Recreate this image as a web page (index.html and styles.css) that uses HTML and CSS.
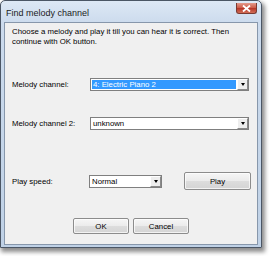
FILE: index.html
```html
<!DOCTYPE html>
<html>
<head>
<meta charset="utf-8">
<link rel="stylesheet" href="styles.css">
</head>
<body>
<div class="window">
  <div class="titlebar">
    <span class="title">Find melody channel</span>
    <span class="close"><svg width="9" height="7" viewBox="0 0 9 7"><path d="M1 0.5 L8 6.5 M8 0.5 L1 6.5" stroke="#fff" stroke-width="1.8"/></svg></span>
  </div>
  <div class="client">
    <p class="intro">Choose a melody and play it till you can hear it is correct. Then continue with OK button.</p>
    <div class="row row-channel">
      <span class="label">Melody channel:</span>
      <div class="combo combo-wide"><span class="value selected">4: Electric Piano 2</span><span class="arrow"><i></i></span></div>
    </div>
    <div class="row row-channel2">
      <span class="label">Melody channel 2:</span>
      <div class="combo combo-wide"><span class="value">unknown</span><span class="arrow"><i></i></span></div>
    </div>
    <div class="row row-speed">
      <span class="label">Play speed:</span>
      <div class="combo combo-small"><span class="value">Normal</span><span class="arrow"><i></i></span></div>
      <button class="btn btn-play">Play</button>
    </div>
    <div class="actions">
      <button class="btn btn-action">OK</button>
      <button class="btn btn-action">Cancel</button>
    </div>
  </div>
</div>
</body>
</html>
```
FILE: styles.css
```css
html, body {
  margin: 0;
  padding: 0;
  background: #ffffff;
}
body {
  width: 270px;
  height: 256px;
  font-family: "Liberation Sans", Arial, sans-serif;
  font-size: 7.8px;
  color: #000;
}
.window {
  width: 262px;
  height: 248px;
  box-sizing: border-box;
  border: 1px solid #4b5665;
  border-radius: 5px 5px 0 0;
  background: linear-gradient(#dde8f5 0px, #ccdbed 22px, #bfd1e6 100%);
  box-shadow: 2px 3px 4px 1px rgba(0, 0, 0, 0.45);
  display: flex;
  flex-direction: column;
  padding: 0 3px 2px 3px;
}
.titlebar {
  height: 21px;
  display: flex;
  align-items: flex-start;
  justify-content: space-between;
  padding-left: 2px;
}
.title {
  font-size: 9px;
  line-height: 9px;
  margin-top: 8px;
  color: #1b1b1b;
}
.close {
  width: 21px;
  height: 11px;
  margin-top: 2px;
  margin-right: 1px;
  box-sizing: border-box;
  border: 1px solid #7a3a32;
  border-top: none;
  border-radius: 0 0 3px 3px;
  background: linear-gradient(#e39a8c 0%, #cf5f4c 45%, #b8382a 55%, #d26e57 100%);
  display: flex;
  align-items: center;
  justify-content: center;
}
.client {
  flex: 1;
  background: #f0f0f0;
  border: 1px solid #8797ab;
  display: flex;
  flex-direction: column;
  padding: 4px 0 0 7px;
}
.intro {
  margin: 0;
  width: 232px;
  line-height: 10px;
}
.row {
  display: flex;
  align-items: center;
}
.label {
  width: 78px;
  flex: none;
}
.row-channel { margin-top: 31px; }
.row-channel2 { margin-top: 26px; }
.row-speed { margin-top: 42px; }
.combo {
  height: 13px;
  box-sizing: border-box;
  border: 1px solid #7f7f7f;
  background: #fff;
  display: flex;
  align-items: stretch;
}
.combo-wide { width: 159px; }
.combo-small { width: 73px; margin-left: -1px; }
.value {
  flex: 1;
  line-height: 11px;
  padding-left: 2px;
  white-space: nowrap;
  overflow: hidden;
}
.value.selected {
  margin: 1px 1px 1px 1px;
  padding-left: 1px;
  line-height: 9px;
  background: #3399ff;
  color: #fff;
}
.arrow {
  width: 11px;
  box-sizing: border-box;
  background: #eeeeee;
  border: 1px solid #fff;
  border-right-color: #8a8a8a;
  border-bottom-color: #8a8a8a;
  display: flex;
  align-items: center;
  justify-content: center;
}
.arrow i {
  width: 0;
  height: 0;
  border-left: 2.5px solid transparent;
  border-right: 2.5px solid transparent;
  border-top: 3px solid #000;
}
.btn {
  font-family: "Liberation Sans", Arial, sans-serif;
  font-size: 7.8px;
  color: #000;
  padding: 0;
  box-sizing: border-box;
  border: 1px solid #8c8c8c;
  border-radius: 2px;
  background: linear-gradient(#f6f6f6 0%, #ebebeb 50%, #dddddd 51%, #d4d4d4 100%);
  box-shadow: inset 0 0 0 1px rgba(255, 255, 255, 0.7);
}
.btn-play {
  width: 67px;
  height: 18px;
  margin-left: 22px;
}
.actions {
  display: flex;
  justify-content: center;
  gap: 4px;
  margin-top: 28px;
  margin-left: -7px;
}
.btn-action {
  width: 56px;
  height: 16px;
}
```
